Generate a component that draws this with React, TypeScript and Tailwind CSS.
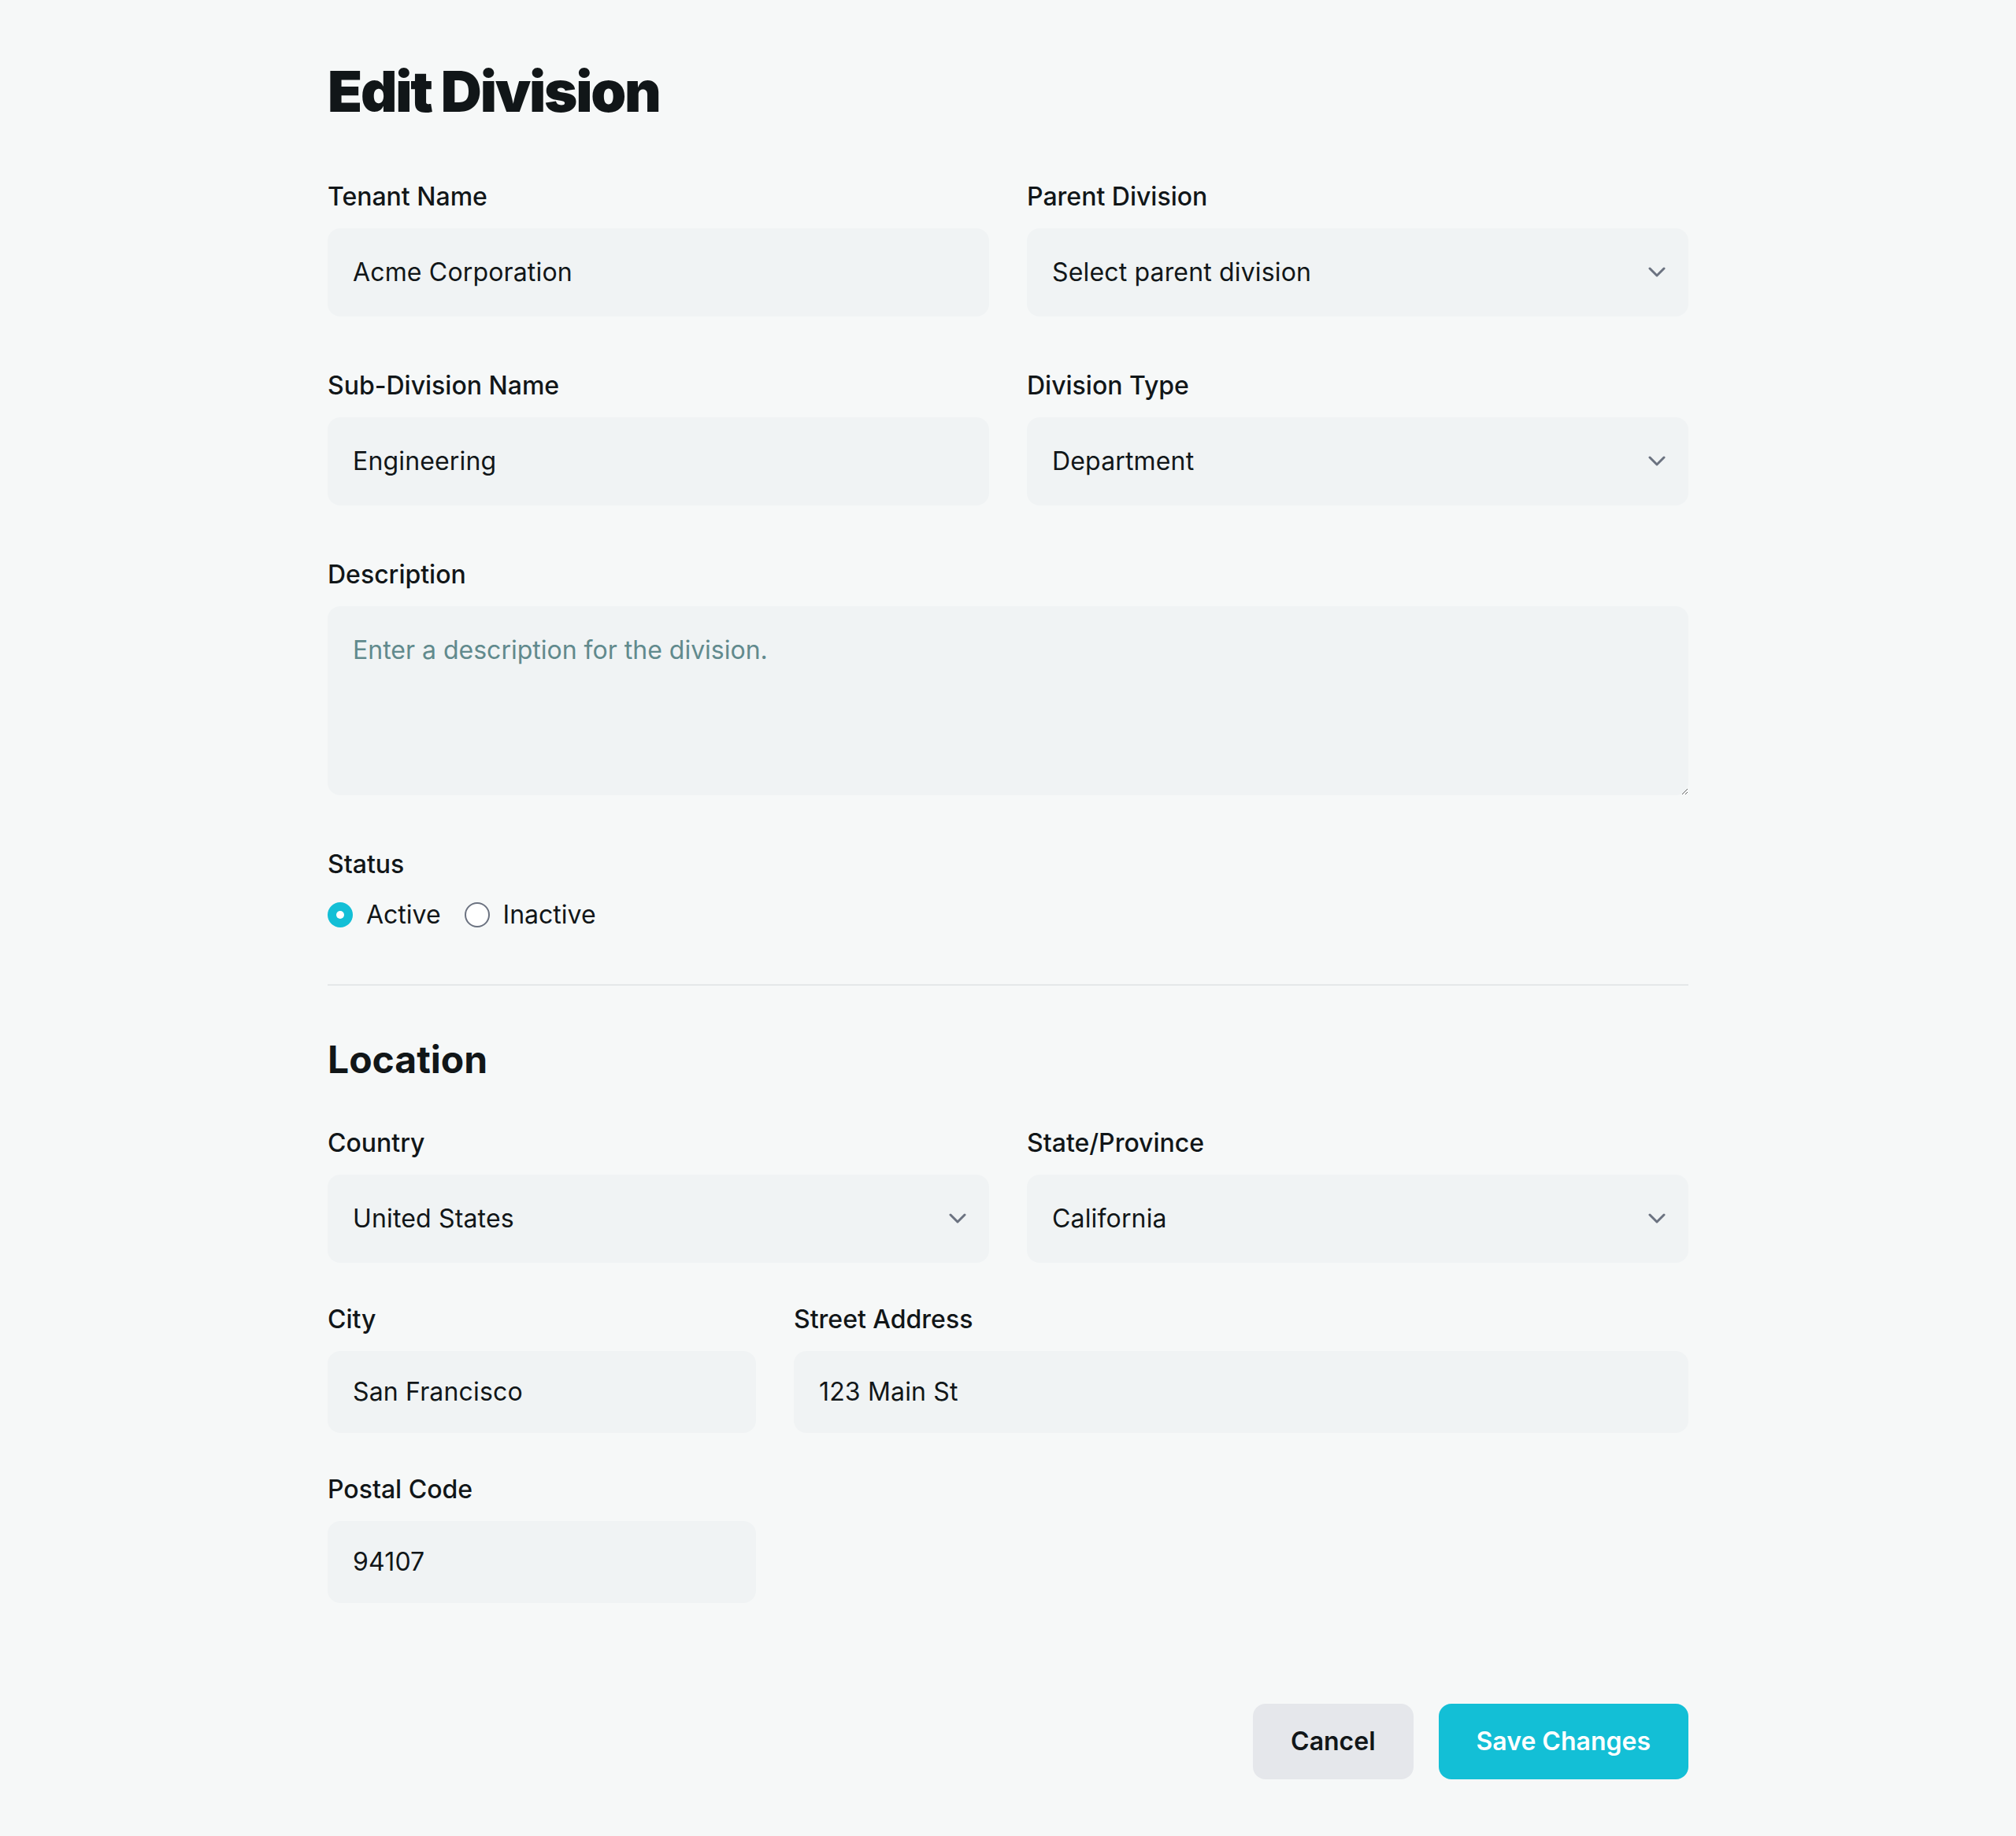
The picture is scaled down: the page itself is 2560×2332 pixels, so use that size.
import React, { useState } from 'react';

const Chevron: React.FC = () => (
  <svg
    className="pointer-events-none absolute right-[29px] top-1/2 -translate-y-1/2"
    width="22"
    height="14"
    viewBox="0 0 22 14"
    fill="none"
  >
    <polyline points="2,2 11,11 20,2" stroke="#6b7280" strokeWidth="3" strokeLinecap="round" strokeLinejoin="round" />
  </svg>
);

const Label: React.FC<{ children: React.ReactNode }> = ({ children }) => (
  <label className="mb-4 block text-[32px] leading-[48px] font-medium text-[#111618]">{children}</label>
);

const TextField: React.FC<{ label: string; value: string; compact?: boolean; className?: string }> = ({
  label,
  value,
  compact,
  className = '',
}) => {
  const [val, setVal] = useState(value);
  return (
    <div className={className}>
      <Label>{label}</Label>
      <input
        value={val}
        onChange={(e) => setVal(e.target.value)}
        className={`block w-full rounded-2xl bg-[#f0f3f4] px-8 text-[32px] leading-[48px] tracking-[0.005em] text-[#111618] outline-none ${compact ? 'py-7' : 'py-8'}`}
      />
    </div>
  );
};

const SelectField: React.FC<{ label: string; value: string; options: string[] }> = ({ label, value, options }) => {
  const [val, setVal] = useState(value);
  return (
    <div>
      <Label>{label}</Label>
      <div className="relative">
        <select
          value={val}
          onChange={(e) => setVal(e.target.value)}
          className="block w-full appearance-none rounded-2xl bg-[#f0f3f4] py-8 pl-8 pr-20 text-[32px] leading-[48px] tracking-[0.005em] text-[#111618] outline-none"
        >
          {options.map((o) => (
            <option key={o} value={o}>
              {o}
            </option>
          ))}
        </select>
        <Chevron />
      </div>
    </div>
  );
};

const Radio: React.FC<{ checked: boolean; label: string; onClick: () => void }> = ({ checked, label, onClick }) => (
  <button type="button" onClick={onClick} className="flex items-center gap-[17px] text-[32px] leading-[48px] text-[#111618]">
    {checked ? (
      <span className="flex h-8 w-8 items-center justify-center rounded-full bg-[#13bfd6]">
        <span className="h-[10px] w-[10px] rounded-full bg-white" />
      </span>
    ) : (
      <span className="h-8 w-8 rounded-full border-2 border-[#6b7280] bg-white" />
    )}
    {label}
  </button>
);

export default function App() {
  const [status, setStatus] = useState<'active' | 'inactive'>('active');

  return (
    <div className="min-h-screen bg-[#f6f8f8] font-[Inter,sans-serif] text-[#111618]">
      <div className="mx-auto w-[1728px] pt-[80px] pb-[70px]">
        <h1 className="mb-[74px] text-[72px] leading-none font-black tracking-[-0.031em]">Edit Division</h1>

        <div className="grid grid-cols-2 gap-x-12 gap-y-16">
          <TextField label="Tenant Name" value="Acme Corporation" />
          <SelectField
            label="Parent Division"
            value="Select parent division"
            options={['Select parent division', 'Operations', 'Research']}
          />
          <TextField label="Sub-Division Name" value="Engineering" />
          <SelectField label="Division Type" value="Department" options={['Department', 'Team', 'Unit']} />

          <div className="col-span-2">
            <Label>Description</Label>
            <textarea
              placeholder="Enter a description for the division."
              className="block h-[240px] w-full rounded-2xl bg-[#f0f3f4] p-8 text-[32px] leading-[48px] text-[#111618] outline-none placeholder:text-[#618a8d]"
            />
          </div>

          <div className="col-span-2">
            <Label>Status</Label>
            <div className="flex items-center gap-[30px]">
              <Radio checked={status === 'active'} label="Active" onClick={() => setStatus('active')} />
              <Radio checked={status === 'inactive'} label="Inactive" onClick={() => setStatus('inactive')} />
            </div>
          </div>
        </div>

        <div className="my-16 h-[2px] bg-[#e4e8e9]" />

        <h2 className="mb-[52px] text-[48px] leading-[60px] font-bold">Location</h2>

        <div className="flex flex-col gap-12">
          <div className="grid grid-cols-2 gap-x-12">
            <SelectField label="Country" value="United States" options={['United States', 'Canada', 'Mexico']} />
            <SelectField label="State/Province" value="California" options={['California', 'New York', 'Texas']} />
          </div>
          <div className="grid grid-cols-3 gap-x-12">
            <TextField label="City" value="San Francisco" compact />
            <TextField label="Street Address" value="123 Main St" compact className="col-span-2" />
          </div>
          <div className="grid grid-cols-3 gap-x-12">
            <TextField label="Postal Code" value="94107" compact />
          </div>
        </div>

        <div className="mt-32 flex justify-end gap-8">
          <button
            type="button"
            className="rounded-2xl bg-[#e5e7eb] px-12 py-6 text-[32px] leading-[48px] font-semibold text-[#111618]"
          >
            Cancel
          </button>
          <button
            type="button"
            className="rounded-2xl bg-[#13bfd6] px-12 py-6 text-[32px] leading-[48px] font-semibold text-white"
          >
            Save Changes
          </button>
        </div>
      </div>
    </div>
  );
}
